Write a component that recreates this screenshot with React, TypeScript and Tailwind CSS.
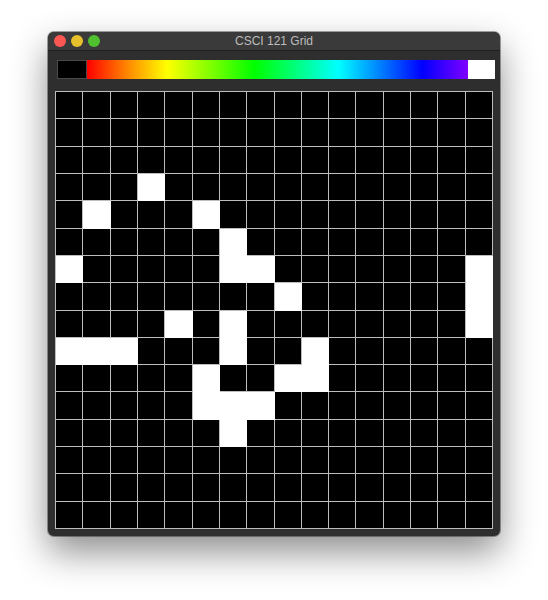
const WHITE: [number, number][] = [
  [3, 3],
  [4, 1],
  [4, 5],
  [5, 6],
  [6, 0],
  [6, 6],
  [6, 7],
  [6, 15],
  [7, 8],
  [7, 15],
  [8, 4],
  [8, 6],
  [8, 15],
  [9, 0],
  [9, 1],
  [9, 2],
  [9, 6],
  [9, 9],
  [10, 5],
  [10, 8],
  [10, 9],
  [11, 5],
  [11, 6],
  [11, 7],
  [12, 6],
];

const isWhite = (r: number, c: number) => WHITE.some(([wr, wc]) => wr === r && wc === c);

export default function App() {
  const cells = [];
  for (let r = 0; r < 16; r++) {
    for (let c = 0; c < 16; c++) {
      const w = isWhite(r, c);
      cells.push(
        <div
          key={`${r}-${c}`}
          className={w ? "bg-white border-r border-b border-white" : "bg-black border-r border-b border-[#bdbdbd]"}
        />
      );
    }
  }

  return (
    <div className="min-h-screen bg-white pl-[48px] pt-[32px]" style={{ fontFamily: '"Liberation Sans", Arial, sans-serif' }}>
      <div className="w-[452px] rounded-[6px] overflow-hidden bg-[#2e2e2e] shadow-[0_0_0_1px_rgba(0,0,0,0.35),0_16px_36px_rgba(0,0,0,0.45)]">
        {/* Title bar */}
        <div className="relative h-[19px] bg-[#3a3a3a] border-b border-[#1f1f1f] flex items-center pl-[6px]">
          <div className="flex gap-[5px]">
            <span className="w-[12px] h-[12px] rounded-full bg-[#fd5754]" />
            <span className="w-[12px] h-[12px] rounded-full bg-[#e8c02b]" />
            <span className="w-[12px] h-[12px] rounded-full bg-[#4fc12e]" />
          </div>
          <div className="absolute inset-0 flex items-center justify-center text-[12px] text-[#bcbcbc]">
            CSCI 121 Grid
          </div>
        </div>

        {/* Content */}
        <div className="px-[7px] pt-[9px] pb-[7px]">
          <div className="ml-[2px] w-[438px] h-[19px] flex">
            <div className="w-[30px] bg-black border border-[#4a4a4a]" />
            <div className="w-[381px] bg-[linear-gradient(to_right,#ff0000_0%,#ff8000_10%,#ffff00_21%,#00ff00_44%,#00ffff_66%,#0000ff_88%,#8000ff_100%)]" />
            <div className="w-[27px] bg-white" />
          </div>

          <div className="mt-[12px] w-[438px] h-[438px] grid grid-cols-[repeat(16,1fr)] grid-rows-[repeat(16,1fr)] border-l border-t border-[#bdbdbd]">
            {cells}
          </div>
        </div>
      </div>
    </div>
  );
}
